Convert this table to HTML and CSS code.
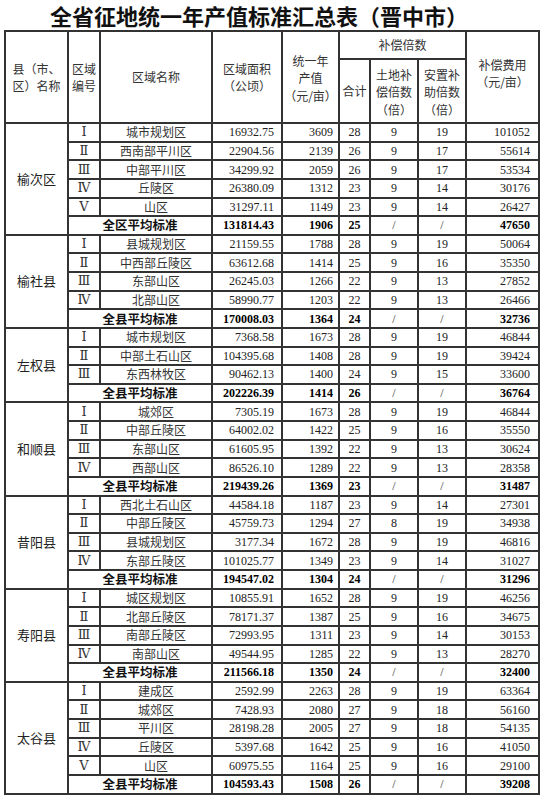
FILE: index.html
```html
<!DOCTYPE html>
<html lang="zh-CN">
<head>
<meta charset="utf-8">
<title>全省征地统一年产值标准汇总表（晋中市）</title>
<link rel="stylesheet" href="styles.css">
</head>
<body>
<div class="page">
<h1 class="title">全省征地统一年产值标准汇总表（晋中市）</h1>
<table class="grid">
<colgroup>
<col class="c1"><col class="c2"><col class="c3"><col class="c4"><col class="c5"><col class="c6"><col class="c7"><col class="c8"><col class="c9">
</colgroup>
<thead>
<tr class="h1">
<th rowspan="2">县（市、<br>区）名称</th>
<th rowspan="2">区域<br>编号</th>
<th rowspan="2">区域名称</th>
<th rowspan="2">区域面积<br>（公顷）</th>
<th rowspan="2" class="tri">统一年<br>产值<br>（元/亩）</th>
<th colspan="3">补偿倍数</th>
<th rowspan="2" class="fee">补偿费用<br>（元/亩）</th>
</tr>
<tr class="h2">
<th>合计</th>
<th class="tri">土地补<br>偿倍数<br>（倍）</th>
<th class="tri">安置补<br>助倍数<br>（倍）</th>
</tr>
</thead>
<tbody>
<tr><td rowspan="6" class="county">榆次区</td><td class="no">Ⅰ</td><td class="name">城市规划区</td><td class="area">16932.75</td><td class="val">3609</td><td class="sum">28</td><td class="m">9</td><td class="m">19</td><td class="fee">101052</td></tr>
<tr><td class="no">Ⅱ</td><td class="name">西南部平川区</td><td class="area">22904.56</td><td class="val">2139</td><td class="sum">26</td><td class="m">9</td><td class="m">17</td><td class="fee">55614</td></tr>
<tr><td class="no">Ⅲ</td><td class="name">中部平川区</td><td class="area">34299.92</td><td class="val">2059</td><td class="sum">26</td><td class="m">9</td><td class="m">17</td><td class="fee">53534</td></tr>
<tr><td class="no">Ⅳ</td><td class="name">丘陵区</td><td class="area">26380.09</td><td class="val">1312</td><td class="sum">23</td><td class="m">9</td><td class="m">14</td><td class="fee">30176</td></tr>
<tr><td class="no">Ⅴ</td><td class="name">山区</td><td class="area">31297.11</td><td class="val">1149</td><td class="sum">23</td><td class="m">9</td><td class="m">14</td><td class="fee">26427</td></tr>
<tr class="avg"><td colspan="2" class="name">全区平均标准</td><td class="area">131814.43</td><td class="val">1906</td><td class="sum">25</td><td class="m">/</td><td class="m">/</td><td class="fee">47650</td></tr>

<tr><td rowspan="5" class="county">榆社县</td><td class="no">Ⅰ</td><td class="name">县城规划区</td><td class="area">21159.55</td><td class="val">1788</td><td class="sum">28</td><td class="m">9</td><td class="m">19</td><td class="fee">50064</td></tr>
<tr><td class="no">Ⅱ</td><td class="name">中西部丘陵区</td><td class="area">63612.68</td><td class="val">1414</td><td class="sum">25</td><td class="m">9</td><td class="m">16</td><td class="fee">35350</td></tr>
<tr><td class="no">Ⅲ</td><td class="name">东部山区</td><td class="area">26245.03</td><td class="val">1266</td><td class="sum">22</td><td class="m">9</td><td class="m">13</td><td class="fee">27852</td></tr>
<tr><td class="no">Ⅳ</td><td class="name">北部山区</td><td class="area">58990.77</td><td class="val">1203</td><td class="sum">22</td><td class="m">9</td><td class="m">13</td><td class="fee">26466</td></tr>
<tr class="avg"><td colspan="2" class="name">全县平均标准</td><td class="area">170008.03</td><td class="val">1364</td><td class="sum">24</td><td class="m">/</td><td class="m">/</td><td class="fee">32736</td></tr>

<tr><td rowspan="4" class="county">左权县</td><td class="no">Ⅰ</td><td class="name">城市规划区</td><td class="area">7368.58</td><td class="val">1673</td><td class="sum">28</td><td class="m">9</td><td class="m">19</td><td class="fee">46844</td></tr>
<tr><td class="no">Ⅱ</td><td class="name">中部土石山区</td><td class="area">104395.68</td><td class="val">1408</td><td class="sum">28</td><td class="m">9</td><td class="m">19</td><td class="fee">39424</td></tr>
<tr><td class="no">Ⅲ</td><td class="name">东西林牧区</td><td class="area">90462.13</td><td class="val">1400</td><td class="sum">24</td><td class="m">9</td><td class="m">15</td><td class="fee">33600</td></tr>
<tr class="avg"><td colspan="2" class="name">全县平均标准</td><td class="area">202226.39</td><td class="val">1414</td><td class="sum">26</td><td class="m">/</td><td class="m">/</td><td class="fee">36764</td></tr>

<tr><td rowspan="5" class="county">和顺县</td><td class="no">Ⅰ</td><td class="name">城郊区</td><td class="area">7305.19</td><td class="val">1673</td><td class="sum">28</td><td class="m">9</td><td class="m">19</td><td class="fee">46844</td></tr>
<tr><td class="no">Ⅱ</td><td class="name">中部丘陵区</td><td class="area">64002.02</td><td class="val">1422</td><td class="sum">25</td><td class="m">9</td><td class="m">16</td><td class="fee">35550</td></tr>
<tr><td class="no">Ⅲ</td><td class="name">东部山区</td><td class="area">61605.95</td><td class="val">1392</td><td class="sum">22</td><td class="m">9</td><td class="m">13</td><td class="fee">30624</td></tr>
<tr><td class="no">Ⅳ</td><td class="name">西部山区</td><td class="area">86526.10</td><td class="val">1289</td><td class="sum">22</td><td class="m">9</td><td class="m">13</td><td class="fee">28358</td></tr>
<tr class="avg"><td colspan="2" class="name">全县平均标准</td><td class="area">219439.26</td><td class="val">1369</td><td class="sum">23</td><td class="m">/</td><td class="m">/</td><td class="fee">31487</td></tr>

<tr><td rowspan="5" class="county">昔阳县</td><td class="no">Ⅰ</td><td class="name">西北土石山区</td><td class="area">44584.18</td><td class="val">1187</td><td class="sum">23</td><td class="m">9</td><td class="m">14</td><td class="fee">27301</td></tr>
<tr><td class="no">Ⅱ</td><td class="name">中部丘陵区</td><td class="area">45759.73</td><td class="val">1294</td><td class="sum">27</td><td class="m">8</td><td class="m">19</td><td class="fee">34938</td></tr>
<tr><td class="no">Ⅲ</td><td class="name">县城规划区</td><td class="area">3177.34</td><td class="val">1672</td><td class="sum">28</td><td class="m">9</td><td class="m">19</td><td class="fee">46816</td></tr>
<tr><td class="no">Ⅳ</td><td class="name">东部丘陵区</td><td class="area">101025.77</td><td class="val">1349</td><td class="sum">23</td><td class="m">9</td><td class="m">14</td><td class="fee">31027</td></tr>
<tr class="avg"><td colspan="2" class="name">全县平均标准</td><td class="area">194547.02</td><td class="val">1304</td><td class="sum">24</td><td class="m">/</td><td class="m">/</td><td class="fee">31296</td></tr>

<tr><td rowspan="5" class="county">寿阳县</td><td class="no">Ⅰ</td><td class="name">城区规划区</td><td class="area">10855.91</td><td class="val">1652</td><td class="sum">28</td><td class="m">9</td><td class="m">19</td><td class="fee">46256</td></tr>
<tr><td class="no">Ⅱ</td><td class="name">北部丘陵区</td><td class="area">78171.37</td><td class="val">1387</td><td class="sum">25</td><td class="m">9</td><td class="m">16</td><td class="fee">34675</td></tr>
<tr><td class="no">Ⅲ</td><td class="name">南部丘陵区</td><td class="area">72993.95</td><td class="val">1311</td><td class="sum">23</td><td class="m">9</td><td class="m">14</td><td class="fee">30153</td></tr>
<tr><td class="no">Ⅳ</td><td class="name">南部山区</td><td class="area">49544.95</td><td class="val">1285</td><td class="sum">22</td><td class="m">9</td><td class="m">13</td><td class="fee">28270</td></tr>
<tr class="avg"><td colspan="2" class="name">全县平均标准</td><td class="area">211566.18</td><td class="val">1350</td><td class="sum">24</td><td class="m">/</td><td class="m">/</td><td class="fee">32400</td></tr>

<tr><td rowspan="6" class="county">太谷县</td><td class="no">Ⅰ</td><td class="name">建成区</td><td class="area">2592.99</td><td class="val">2263</td><td class="sum">28</td><td class="m">9</td><td class="m">19</td><td class="fee">63364</td></tr>
<tr><td class="no">Ⅱ</td><td class="name">城郊区</td><td class="area">7428.93</td><td class="val">2080</td><td class="sum">27</td><td class="m">9</td><td class="m">18</td><td class="fee">56160</td></tr>
<tr><td class="no">Ⅲ</td><td class="name">平川区</td><td class="area">28198.28</td><td class="val">2005</td><td class="sum">27</td><td class="m">9</td><td class="m">18</td><td class="fee">54135</td></tr>
<tr><td class="no">Ⅳ</td><td class="name">丘陵区</td><td class="area">5397.68</td><td class="val">1642</td><td class="sum">25</td><td class="m">9</td><td class="m">16</td><td class="fee">41050</td></tr>
<tr><td class="no">Ⅴ</td><td class="name">山区</td><td class="area">60975.55</td><td class="val">1164</td><td class="sum">25</td><td class="m">9</td><td class="m">16</td><td class="fee">29100</td></tr>
<tr class="avg"><td colspan="2" class="name">全县平均标准</td><td class="area">104593.43</td><td class="val">1508</td><td class="sum">26</td><td class="m">/</td><td class="m">/</td><td class="fee">39208</td></tr>
</tbody>
</table>
</div>
</body>
</html>
```

FILE: styles.css
```css
html, body {
  margin: 0;
  padding: 0;
  background: #ffffff;
}

.page {
  width: 542px;
  font-family: "Liberation Serif", "Noto Sans CJK SC", serif;
  color: #222;
}

.title {
  margin: 0;
  height: 30px;
  line-height: 30px;
  font-family: "Noto Sans CJK SC", sans-serif;
  font-weight: 700;
  font-size: 22px;
  text-align: center;
  color: #111;
  padding-right: 24px;
}

.grid {
  margin-left: 4px;
  width: 536px;
  table-layout: fixed;
  border-collapse: collapse;
  font-size: 12px;
}

.c1 { width: 63px; }
.c2 { width: 32px; }
.c3 { width: 112px; }
.c4 { width: 70px; }
.c5 { width: 57px; }
.c6 { width: 31px; }
.c7 { width: 48px; }
.c8 { width: 48px; }
.c9 { width: 73px; }

.grid th,
.grid td {
  border: 2px solid #333;
  padding: 0;
  overflow: hidden;
  white-space: nowrap;
}

.grid th {
  font-family: "Noto Sans CJK SC", sans-serif;
  font-weight: 400;
  font-size: 12px;
  line-height: 17.5px;
  color: #333;
  text-align: center;
  vertical-align: middle;
}

.grid th.tri {
  line-height: 17.5px;
  padding-top: 2px;
}

.h1 { height: 28px; }
.h2 { height: 64px; }

.grid th.fee {
  padding-bottom: 8px;
}

.grid tbody tr { height: 18.64px; }

.grid td {
  line-height: 16px;
  vertical-align: middle;
}

.county {
  font-family: "Noto Sans CJK SC", sans-serif;
  font-size: 13px;
  text-align: center;
  color: #222;
}

.no {
  text-align: center;
  font-family: "DejaVu Serif", "Liberation Serif", serif;
  font-size: 13px;
  color: #333;
}

.name {
  text-align: center;
  font-family: "Noto Sans CJK SC", sans-serif;
  font-size: 12px;
  color: #333;
}

.area {
  text-align: right;
  padding-right: 7px !important;
}

.val {
  text-align: right;
  padding-right: 5px !important;
}

.sum {
  text-align: center;
}

.m {
  text-align: center;
}

td.fee {
  text-align: right;
  padding-right: 8px !important;
}

.avg td {
  font-weight: 700;
  color: #000;
}

.avg .m {
  font-weight: 400;
  color: #333;
}

.avg .name {
  font-weight: 700;
  font-size: 12.5px;
  color: #111;
}
```
